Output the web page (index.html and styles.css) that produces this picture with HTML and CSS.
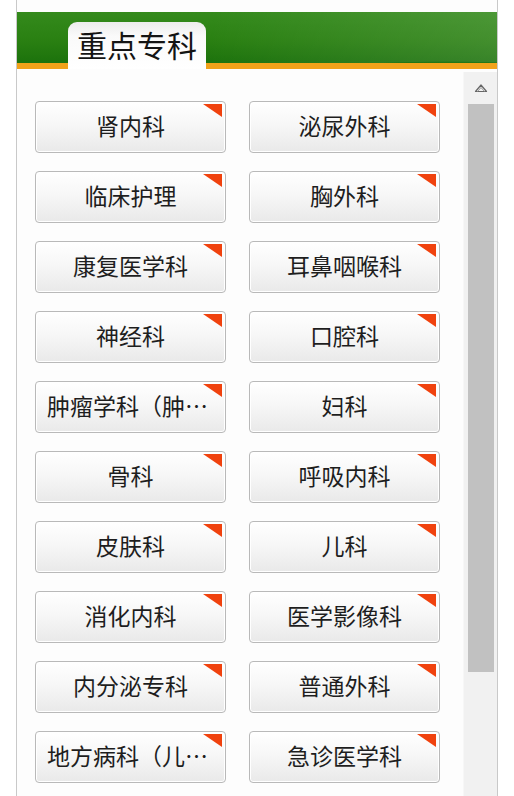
FILE: index.html
```html
<!DOCTYPE html>
<html lang="zh-CN">
<head>
<meta charset="utf-8">
<title>重点专科</title>
<link rel="stylesheet" href="styles.css">
</head>
<body>
<div class="panel">
  <div class="header">
    <div class="tab">重点专科</div>
  </div>
  <div class="body">
    <div class="list">
      <a class="btn">肾内科</a>
      <a class="btn">泌尿外科</a>
      <a class="btn">临床护理</a>
      <a class="btn">胸外科</a>
      <a class="btn">康复医学科</a>
      <a class="btn">耳鼻咽喉科</a>
      <a class="btn">神经科</a>
      <a class="btn">口腔科</a>
      <a class="btn">肿瘤学科（肿瘤内科）</a>
      <a class="btn">妇科</a>
      <a class="btn">骨科</a>
      <a class="btn">呼吸内科</a>
      <a class="btn">皮肤科</a>
      <a class="btn">儿科</a>
      <a class="btn">消化内科</a>
      <a class="btn">医学影像科</a>
      <a class="btn">内分泌专科</a>
      <a class="btn">普通外科</a>
      <a class="btn">地方病科（儿科）</a>
      <a class="btn">急诊医学科</a>
    </div>
    <div class="scrollbar">
      <div class="arrow">
        <svg width="14" height="10" viewBox="0 0 14 10"><path d="M1.5 8.5 L7 2 L12.5 8.5 Z" fill="none" stroke="#666" stroke-width="1.2" stroke-linejoin="round"/><path d="M3.5 8.5 L7 4.5 L10.5 8.5" fill="none" stroke="#999" stroke-width="1"/></svg>
      </div>
      <div class="thumb"></div>
    </div>
  </div>
</div>
</body>
</html>
```
FILE: styles.css
```css
html, body {
  margin: 0;
  padding: 0;
  background: #ffffff;
}
body {
  font-family: "Noto Sans CJK SC", "Noto Sans", sans-serif;
  width: 514px;
  height: 796px;
  overflow: hidden;
}
.panel {
  margin: 0 16px;
  width: 480px;
  height: 796px;
  padding-top: 12px;
  border-left: 1px solid #c9c9c9;
  border-right: 1px solid #c9c9c9;
  background: #fdfdfd;
  display: flex;
  flex-direction: column;
  box-sizing: content-box;
}
.header {
  height: 51px;
  border-bottom: 6px solid #f1a21a;
  background:
    radial-gradient(ellipse 300px 40px at 430px 78px, rgba(20,110,10,0.55) 0%, rgba(20,110,10,0.55) 70%, rgba(20,110,10,0) 72%),
    linear-gradient(100deg, rgba(255,255,255,0) 40%, rgba(255,255,255,0.12) 100%),
    linear-gradient(180deg, #348a1c 0%, #2a8012 55%, #1c720c 100%);
  display: flex;
  align-items: flex-end;
}
.tab {
  margin-left: 51px;
  margin-bottom: -6px;
  width: 138px;
  height: 47px;
  box-sizing: border-box;
  border-radius: 9px 9px 0 0;
  background: linear-gradient(180deg, #ececec 0%, #fafafa 30%, #ffffff 100%);
  font-size: 30px;
  line-height: 1;
  color: #141414;
  font-weight: 400;
  padding: 7px 0 0 9px;
}
.body {
  flex: 1;
  display: flex;
  overflow: hidden;
}
.list {
  flex: 1;
  padding: 32px 0 0 18px;
  display: grid;
  grid-template-columns: 191px 191px;
  grid-auto-rows: 52px;
  column-gap: 23px;
  row-gap: 18px;
  align-content: start;
}
.btn {
  position: relative;
  display: block;
  box-sizing: border-box;
  height: 52px;
  border: 1px solid #b9b9b9;
  border-radius: 4px;
  background: linear-gradient(180deg, #ffffff 0%, #f7f7f7 45%, #e9e9e9 100%);
  box-shadow: inset 0 0 0 1px #ffffff;
  font-size: 23px;
  line-height: 46px;
  color: #1e1e1e;
  text-align: center;
  padding: 0 11px;
  white-space: nowrap;
  overflow: hidden;
  text-overflow: ellipsis;
}
.btn::after {
  content: "";
  position: absolute;
  top: 2px;
  right: 3px;
  width: 0;
  height: 0;
  border-top: 13px solid #f0420e;
  border-left: 19px solid transparent;
}
.scrollbar {
  width: 33px;
  margin-top: 3px;
  background: #f1f1f1;
  border-left: 1px solid #f7f7f7;
  display: flex;
  flex-direction: column;
  align-items: center;
}
.arrow {
  height: 32px;
  display: flex;
  align-items: center;
  justify-content: center;
}
.thumb {
  width: 26px;
  height: 568px;
  background: #c1c1c1;
}
```
